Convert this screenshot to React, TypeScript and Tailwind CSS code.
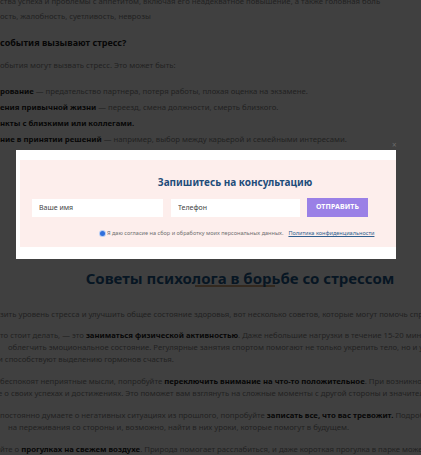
import React, { FC } from "react";

const Line: FC<{ className?: string; children: React.ReactNode }> = ({ className = "", children }) => (
  <div className={`whitespace-nowrap ${className}`}>{children}</div>
);

const Article = () => {
  return (
    <div className="text-[7.75px] text-[#858585] font-['Noto_Sans',sans-serif]">
      {/* top part, mostly hidden behind the modal */}
      <Line className="leading-[12px] mt-[-5px]">
        ства успеха и проблемы с аппетитом, включая его неадекватное повышение, а также головная боль
      </Line>
      <Line className="leading-[12px] mt-[3px]">ость, жалобность, суетливость, неврозы</Line>
      <Line className="leading-[14px] mt-[14px] text-[9px] font-bold text-[#1c1c1c]">
        события вызывают стресс?
      </Line>
      <Line className="leading-[12px] mt-[9px]">обытия могут вызвать стресс. Это может быть:</Line>
      <div className="mt-[12px] leading-[16px]">
        <Line>
          <b className="text-[#1c1c1c]">рование</b> — предательство партнера, потеря работы, плохая оценка на экзамене.
        </Line>
        <Line>
          <b className="text-[#1c1c1c]">ения привычной жизни</b> — переезд, смена должности, смерть близкого.
        </Line>
        <Line>
          <b className="text-[#1c1c1c]">нкты с близкими или коллегами.</b>
        </Line>
        <Line>
          <b className="text-[#1c1c1c]">ние в принятии решений</b> — например, выбор между карьерой и семейными интересами.
        </Line>
      </div>

      <div className="mt-[123px] w-[480px] text-center text-[15px] leading-[16px] font-bold text-[#1f5a8c]">
        Советы психолога в борьбе со стрессом
      </div>
      <div className="ml-[195px] mt-[-1px] w-[80px] h-[2px] bg-[#c9a47e]" />

      <div className="leading-[12.2px]">
        <Line className="mt-[20.5px]">
          зить уровень стресса и улучшить общее состояние здоровья, вот несколько советов, которые могут помочь справиться
        </Line>
        <div className="mt-[9.2px]">
          <Line>
            то стоит делать, — это <b className="text-[#1c1c1c]">заниматься физической активностью</b>. Даже небольшие нагрузки в течение 15-20 минут в день
          </Line>
          <Line className="pl-[8px]">
            облегчить эмоциональное состояние. Регулярные занятия спортом помогают не только укрепить тело, но и улучшать
          </Line>
          <Line className="ml-[-2px]">и способствуют выделению гормонов счастья.</Line>
        </div>
        <div className="mt-[9.2px]">
          <Line>
            беспокоят неприятные мысли, попробуйте <b className="text-[#1c1c1c]">переключить внимание на что-то положительное</b>. При возникновении
          </Line>
          <Line className="ml-[-2px]">
            е о своих успехах и достижениях. Это поможет вам взглянуть на сложные моменты с другой стороны и значительно
          </Line>
        </div>
        <div className="mt-[9.6px]">
          <Line>
            постоянно думаете о негативных ситуациях из прошлого, попробуйте <b className="text-[#1c1c1c]">записать все, что вас тревожит.</b> Подробный рассказ
          </Line>
          <Line className="pl-[8px]">
            на переживания со стороны и, возможно, найти в них уроки, которые помогут в будущем.
          </Line>
        </div>
        <Line className="mt-[9.6px]">
          йте о <b className="text-[#1c1c1c]">прогулках на свежем воздухе</b>. Природа помогает расслабиться, и даже короткая прогулка в парке может
        </Line>
      </div>
    </div>
  );
};

const ConsultForm = () => {
  return (
    <div className="w-[430px] h-[87px] bg-[#fdeeec] pt-[16px] font-['Noto_Sans',sans-serif]">
      <p className="text-center text-[10px] leading-[12px] font-bold text-[#1f4d7a]">
        Запишитесь на консультацию
      </p>
      <div className="flex items-center mt-[10px] pl-[12px]">
        <input
          type="text"
          placeholder="Ваше имя"
          className="w-[131px] h-[18px] bg-white pl-[7px] text-[7px] text-[#444] placeholder:text-[#444] outline-none"
        />
        <input
          type="text"
          placeholder="Телефон"
          className="ml-[8px] w-[129px] h-[18px] bg-white pl-[7px] text-[7px] text-[#444] placeholder:text-[#444] outline-none"
        />
        <button
          type="button"
          className="ml-[7px] w-[61px] h-[19px] bg-[#9a80e6] text-white text-[7px] font-bold tracking-[0.1px]"
        >
          ОТПРАВИТЬ
        </button>
      </div>
      <div className="flex items-center mt-[12px] pl-[80px] h-[8px] text-[5.55px] leading-[8px]">
        <span className="w-[5px] h-[5px] rounded-full bg-[#2f6fdc] ring-1 ring-[#b7cdf3]" />
        <span className="ml-[2px] text-[#707070]">
          Я даю согласие на сбор и обработку моих персональных данных.
        </span>
        <a href="#" className="ml-[5px] text-[#2f5f8f] underline">
          Политика конфиденциальности
        </a>
      </div>
    </div>
  );
};

const App = () => {
  return (
    <div className="relative w-[421px] h-[455px] overflow-hidden bg-white">
      <Article />
      <div className="absolute inset-0 bg-black/75" />
      <span className="absolute left-[392px] top-[141px] text-[8px] leading-[8px] text-[#6a6a6a]">×</span>
      <div className="absolute left-[16px] top-[150px] w-[380px] h-[109px] bg-white overflow-hidden pl-[4px] pt-[10px]">
        <ConsultForm />
      </div>
    </div>
  );
};

export default App;
